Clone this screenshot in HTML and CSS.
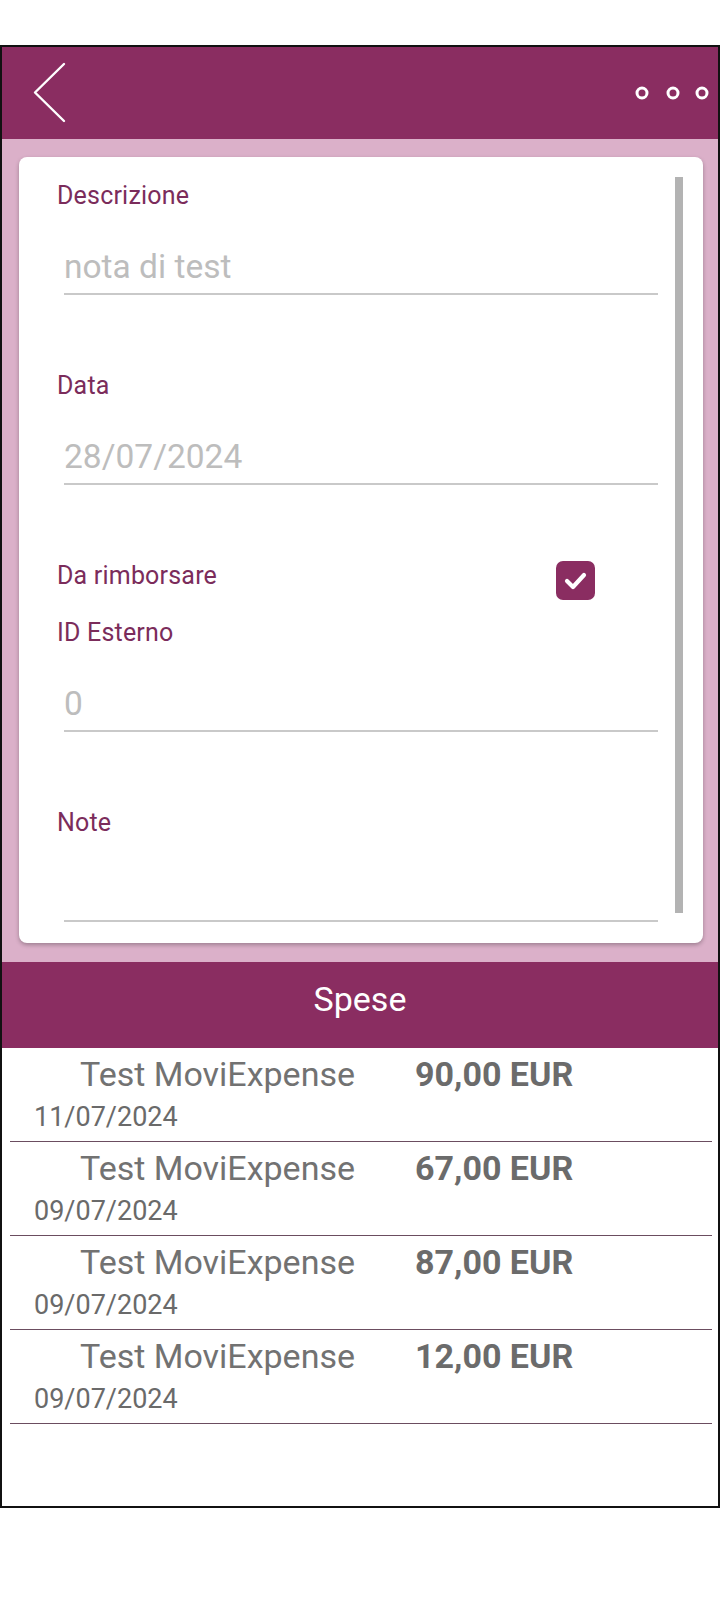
FILE: index.html
```html
<!DOCTYPE html>
<html lang="it">
<head>
<meta charset="utf-8">
<title>Nota spese</title>
<link rel="stylesheet" href="styles.css">
</head>
<body>
<div class="frame">
  <header class="topbar">
    <svg class="back" width="40" height="70" viewBox="0 0 40 70">
      <polyline points="32,7 3,35.5 32,64" fill="none" stroke="#fff" stroke-width="2.4" stroke-linecap="round" stroke-linejoin="round"/>
    </svg>
    <svg class="more" width="80" height="20" viewBox="0 0 80 20">
      <circle cx="10" cy="10" r="5" fill="none" stroke="#fff" stroke-width="3"/>
      <circle cx="41" cy="10" r="5" fill="none" stroke="#fff" stroke-width="3"/>
      <circle cx="70" cy="10" r="5" fill="none" stroke="#fff" stroke-width="3"/>
    </svg>
  </header>

  <section class="formarea">
    <div class="card">
      <div class="field first">
        <div class="label">Descrizione</div>
        <div class="value">nota di test</div>
      </div>
      <div class="field">
        <div class="label">Data</div>
        <div class="value">28/07/2024</div>
      </div>
      <div class="checkrow">
        <div class="label">Da rimborsare</div>
        <div class="checkbox">
          <svg width="39" height="39" viewBox="0 0 39 39">
            <polyline points="11,20 17,26 28,14" fill="none" stroke="#fff" stroke-width="4.2" stroke-linecap="round" stroke-linejoin="round"/>
          </svg>
        </div>
      </div>
      <div class="field near">
        <div class="label">ID Esterno</div>
        <div class="value">0</div>
      </div>
      <div class="field">
        <div class="label">Note</div>
        <div class="value"></div>
      </div>
      <div class="scrollbar"></div>
    </div>
  </section>

  <div class="sectionbar">Spese</div>

  <ul class="list">
    <li class="row">
      <span class="title">Test MoviExpense</span>
      <span class="amount">90,00 EUR</span>
      <span class="date">11/07/2024</span>
    </li>
    <li class="row">
      <span class="title">Test MoviExpense</span>
      <span class="amount">67,00 EUR</span>
      <span class="date">09/07/2024</span>
    </li>
    <li class="row">
      <span class="title">Test MoviExpense</span>
      <span class="amount">87,00 EUR</span>
      <span class="date">09/07/2024</span>
    </li>
    <li class="row">
      <span class="title">Test MoviExpense</span>
      <span class="amount">12,00 EUR</span>
      <span class="date">09/07/2024</span>
    </li>
  </ul>
</div>
</body>
</html>
```

FILE: styles.css
```css
* { box-sizing: border-box; }

html, body {
  margin: 0;
  padding: 0;
  background: #ffffff;
}

body {
  font-family: Roboto, "Liberation Sans", sans-serif;
  padding-top: 45px;
}

.frame {
  width: 720px;
  height: 1463px;
  border: 2px solid #111;
  display: flex;
  flex-direction: column;
  background: #fff;
}

.topbar {
  height: 92px;
  flex: none;
  background: #8a2d61;
  display: flex;
  align-items: center;
  justify-content: space-between;
  padding: 0 6px 0 30px;
}

.back { display: block; margin-top: -3px; }
.more { display: block; }

.formarea {
  flex: none;
  background: #dbb0c9;
  padding: 18px 15px 19px 17px;
}

.card {
  position: relative;
  background: #fff;
  border-radius: 8px;
  box-shadow: 0 2px 4px rgba(0, 0, 0, 0.28);
  padding: 0 45px 21px 38px;
  display: flex;
  flex-direction: column;
}

.label {
  font-size: 25px;
  letter-spacing: 0.2px;
  line-height: 30px;
  color: #7b2c5b;
}

.field {
  margin-top: 76px;
}

.field.first { margin-top: 24px; }
.field.near { margin-top: 18px; }

.value {
  margin: 36px 0 0 7px;
  height: 48px;
  padding-bottom: 6px;
  border-bottom: 2px solid #c9c9c9;
  font-size: 33.5px;
  line-height: 40px;
  color: #bdbdbd;
}

.checkrow {
  margin-top: 76px;
  height: 39px;
  display: flex;
  justify-content: space-between;
  align-items: flex-start;
  padding-right: 63px;
}

.checkbox {
  width: 39px;
  height: 39px;
  border-radius: 7px;
  background: #8a2d61;
}

.checkbox svg { display: block; }

.scrollbar {
  position: absolute;
  left: 656px;
  top: 20px;
  width: 8px;
  height: 736px;
  background: #b3b3b3;
}

.sectionbar {
  flex: none;
  height: 86px;
  background: #8a2d61;
  color: #fff;
  font-size: 34px;
  line-height: 40px;
  text-align: center;
  padding-top: 17px;
}

.list {
  list-style: none;
  margin: 0 6px 0 8px;
  padding: 0;
}

.row {
  display: grid;
  grid-template-columns: 405px 1fr;
  padding: 6px 0 9px 0;
  border-bottom: 1px solid #6b4d60;
}

.title {
  padding-left: 70px;
  font-size: 34px;
  line-height: 40px;
  color: #727272;
  white-space: nowrap;
}

.amount {
  font-size: 34px;
  line-height: 40px;
  font-weight: bold;
  color: #6b6b6b;
  white-space: nowrap;
}

.date {
  grid-column: 1 / span 2;
  margin-top: 8px;
  padding-left: 24px;
  font-size: 27px;
  line-height: 30px;
  color: #6a6a6a;
}
```
